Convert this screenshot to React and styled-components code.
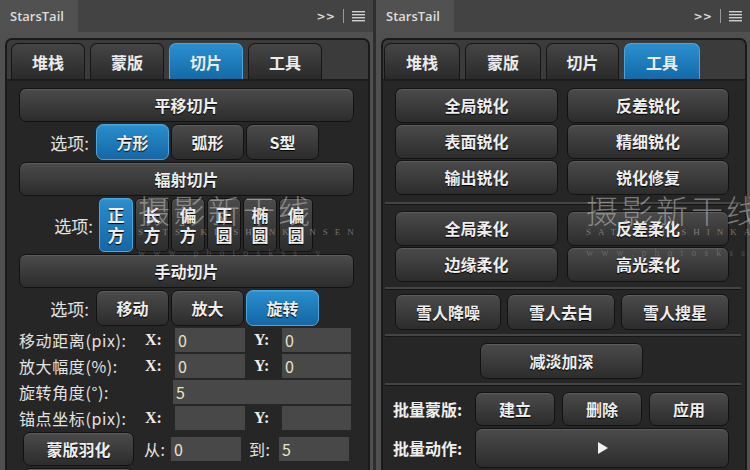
import React from "react"
import styled, { createGlobalStyle } from "styled-components"

const Global = createGlobalStyle`
  html, body { margin: 0; padding: 0; background: #2b2b2b; }
  body { font-family: "Noto Sans CJK SC", "Noto Sans", sans-serif; }
`

const Root = styled.div`
  position: relative;
  width: 750px;
  height: 470px;
  display: flex;
  overflow: hidden;
  background: #2b2b2b;
`

const Panel = styled.div`
  width: ${p => p.w}px;
  display: flex;
  flex-direction: column;
  background: #505050;
  border-left: ${p => (p.right ? "3px solid #2e2e2e" : "none")};
  flex-shrink: 0;
`

const Header = styled.div`
  height: 32px;
  display: flex;
  align-items: stretch;
  background: #434343;
  flex-shrink: 0;
`

const TitleTab = styled.div`
  width: 78px;
  background: #515151;
  color: #dcdcdc;
  font-family: "Open Sans", "Liberation Sans", sans-serif;
  font-weight: 600;
  font-size: 13px;
  display: flex;
  align-items: center;
  padding-left: 10px;
  box-sizing: border-box;
`

const HeaderTools = styled.div`
  margin-left: auto;
  display: flex;
  align-items: center;
  gap: 8px;
  padding-right: 8px;
  color: #d8d8d8;
  font-family: "DejaVu Sans", sans-serif;
  font-weight: bold;
  font-size: 11px;
`

const Divider = styled.span`
  width: 1px;
  height: 14px;
  background: #9a9a9a;
`

const Body = styled.div`
  flex: 1;
  padding: 6px 3px 0 5px;
  display: flex;
  flex-direction: column;
`

const Frame = styled.div`
  flex: 1;
  border: 2px solid #1a1a1a;
  border-bottom: none;
  border-radius: 7px 7px 0 0;
  background: #262626;
  display: flex;
  flex-direction: column;
`

const TabStrip = styled.div`
  display: flex;
  gap: ${p => p.gap}px;
  padding: 3px 4px 0 ${p => p.pl}px;
  background: #3b3b3b;
  border-radius: 5px 5px 0 0;
  border-bottom: 2px solid #1c1c1c;
`

const Tab = styled.div`
  width: ${p => p.w}px;
  height: 36px;
  box-sizing: border-box;
  border: 1px solid ${p => (p.active ? "#4aa5de" : "#161616")};
  border-bottom: none;
  border-radius: 7px 7px 0 0;
  background: ${p =>
    p.active
      ? "linear-gradient(#2b8fd0, #146aa8)"
      : "linear-gradient(#454545, #2a2a2a)"};
  color: #ececec;
  font-weight: 700;
  font-size: 16px;
  display: flex;
  align-items: center;
  justify-content: center;
`

const Content = styled.div`
  display: flex;
  flex-direction: column;
  gap: 2px;
  padding: ${p => p.pad};
`

const Btn = styled.div`
  box-sizing: border-box;
  height: ${p => p.h || 34}px;
  width: ${p => (p.w ? `${p.w}px` : "auto")};
  margin-left: ${p => p.ml || 0}px;
  border: 1px solid ${p => (p.active ? "#4aa5de" : "#121212")};
  border-radius: ${p => p.r || 7}px;
  background: ${p =>
    p.active
      ? "linear-gradient(#2a8ece, #1467a4)"
      : "linear-gradient(#4b4b4b, #2c2c2c)"};
  box-shadow: inset 0 1px 0 rgba(255, 255, 255, 0.1);
  color: #eeeeee;
  font-weight: 700;
  font-size: ${p => p.fs || 16}px;
  line-height: 1.15;
  display: flex;
  align-items: center;
  justify-content: center;
  text-align: center;
  text-shadow: 0 1px 1px #000;
`

const OptionRow = styled.div`
  display: flex;
  align-items: center;
  gap: ${p => p.gap || 2}px;
`

const OptLabel = styled.div`
  width: ${p => p.w}px;
  margin-right: ${p => p.mr}px;
  text-align: right;
  color: #e2e2e2;
  font-size: 17px;
`

const FieldGrid = styled.div`
  display: grid;
  grid-template-columns: 126px 30px 70px 37px 69px;
  align-items: center;
  height: 24px;
`

const FieldLabel = styled.div`
  color: #e2e2e2;
  font-size: 16px;
  letter-spacing: 0.6px;
  white-space: nowrap;
`

const Axis = styled.div`
  color: #eeeeee;
  font-family: "Liberation Serif", "DejaVu Serif", serif;
  font-weight: bold;
  font-size: 16px;
  padding-left: ${p => p.pl || 0}px;
`

const Input = styled.div`
  height: 24px;
  box-sizing: border-box;
  background: #484848;
  color: #ece3c9;
  font-size: 16px;
  padding-left: 3px;
  display: flex;
  align-items: center;
  grid-column: ${p => p.span || "auto"};
`

const BottomGrid = styled.div`
  display: grid;
  grid-template-columns: 122px 30px 70px 38px 70px;
  align-items: center;
`

const TwoCol = styled.div`
  display: grid;
  grid-template-columns: 163px 162px;
  column-gap: 9px;
  row-gap: 1px;
`

const ThreeCol = styled.div`
  display: grid;
  grid-template-columns: 106px 108px 108px;
  column-gap: 6px;
`

const Sep = styled.div`
  height: 2px;
  margin: ${p => p.m};
  background: #444444;
  border-bottom: 1px solid #161616;
`

const BatchRow = styled.div`
  display: grid;
  grid-template-columns: 73px 80px 80px 80px;
  column-gap: 7px;
  align-items: center;
`

const BatchLabel = styled.div`
  color: #eeeeee;
  font-weight: 700;
  font-size: 16px;
  white-space: nowrap;
  margin-left: -2px;
`

const Watermark = styled.div`
  position: absolute;
  left: ${p => p.x}px;
  top: ${p => p.y}px;
  pointer-events: none;
  color: rgba(205, 205, 205, 0.5);
  font-family: "Noto Sans CJK SC", sans-serif;
  font-weight: 300;
  white-space: nowrap;
`

const Big = styled.div`
  font-size: 32px;
  letter-spacing: 3px;
  line-height: 34px;
`

const Small = styled.div`
  font-family: "Liberation Serif", serif;
  font-size: 9px;
  letter-spacing: 7px;
  margin-top: 1px;
  color: rgba(210, 210, 210, 0.45);
`

const Url = styled.div`
  font-family: "Liberation Serif", serif;
  font-size: 10px;
  letter-spacing: 8px;
  margin-top: 10px;
  color: rgba(210, 210, 210, 0.25);
`

const Menu = () => (
  <svg width="13" height="11" viewBox="0 0 13 11">
    {[1, 4, 7, 10].map(y => (
      <rect key={y} x="0" y={y - 1} width="13" height="1.4" fill="#cfcfcf" />
    ))}
  </svg>
)

const Play = () => (
  <svg width="14" height="14" viewBox="0 0 14 14">
    <path d="M3 1 L13 7 L3 13 Z" fill="#f2f2f2" />
  </svg>
)

const PanelHeader = () => (
  <Header>
    <TitleTab>StarsTail</TitleTab>
    <HeaderTools>
      <span>&gt;&gt;</span>
      <Divider />
      <Menu />
    </HeaderTools>
  </Header>
)

const tabs = ["堆栈", "蒙版", "切片", "工具"]

const tall = [
  ["正", "方"],
  ["长", "方"],
  ["偏", "方"],
  ["正", "圆"],
  ["椭", "圆"],
  ["偏", "圆"],
]

const SlicePanel = () => (
  <Panel w={373}>
    <PanelHeader />
    <Body>
      <Frame>
        <TabStrip gap={5} pl={4}>
          {tabs.map((t, i) => (
            <Tab key={t} w={74} active={i === 2}>{t}</Tab>
          ))}
        </TabStrip>
        <Content pad="7px 14px 0 12px">
          <Btn>平移切片</Btn>
          <OptionRow>
            <OptLabel w={70} mr={5}>选项:</OptLabel>
            <Btn h={36} w={73} active>方形</Btn>
            <Btn h={36} w={73}>弧形</Btn>
            <Btn h={36} w={73}>S型</Btn>
          </OptionRow>
          <Btn>辐射切片</Btn>
          <OptionRow>
            <OptLabel w={74} mr={4}>选项:</OptLabel>
            {tall.map((c, i) => (
              <Btn key={i} h={54} w={34} r={5} fs={17} active={i === 0}>
                {c[0]}<br />{c[1]}
              </Btn>
            ))}
          </OptionRow>
          <Btn>手动切片</Btn>
          <OptionRow>
            <OptLabel w={70} mr={5}>选项:</OptLabel>
            <Btn h={36} w={73}>移动</Btn>
            <Btn h={36} w={73}>放大</Btn>
            <Btn h={36} w={73} active>旋转</Btn>
          </OptionRow>
          <FieldGrid>
            <FieldLabel>移动距离(pix):</FieldLabel>
            <Axis>X:</Axis>
            <Input>0</Input>
            <Axis pl={9}>Y:</Axis>
            <Input>0</Input>
          </FieldGrid>
          <FieldGrid>
            <FieldLabel>放大幅度(%):</FieldLabel>
            <Axis>X:</Axis>
            <Input>0</Input>
            <Axis pl={9}>Y:</Axis>
            <Input>0</Input>
          </FieldGrid>
          <FieldGrid>
            <FieldLabel>旋转角度(°):</FieldLabel>
            <Input span="2 / 6" style={{ marginLeft: 28 }}>5</Input>
          </FieldGrid>
          <FieldGrid>
            <FieldLabel>锚点坐标(pix):</FieldLabel>
            <Axis>X:</Axis>
            <Input />
            <Axis pl={9}>Y:</Axis>
            <Input />
          </FieldGrid>
          <BottomGrid>
            <Btn w={111} ml={4}>蒙版羽化</Btn>
            <FieldLabel style={{ paddingLeft: 3 }}>从:</FieldLabel>
            <Input>0</Input>
            <FieldLabel style={{ paddingLeft: 8 }}>到:</FieldLabel>
            <Input>5</Input>
          </BottomGrid>
          <BottomGrid>
            <Btn w={111} ml={4} />
          </BottomGrid>
        </Content>
      </Frame>
    </Body>
  </Panel>
)

const ToolsPanel = () => (
  <Panel w={374} right>
    <PanelHeader />
    <Body>
      <Frame>
        <TabStrip gap={5} pl={1}>
          {tabs.map((t, i) => (
            <Tab key={t} w={i === 2 ? 73 : 76} active={i === 3}>{t}</Tab>
          ))}
        </TabStrip>
        <Content pad="7px 0 0 12px">
          <TwoCol>
            <Btn h={35}>全局锐化</Btn>
            <Btn h={35}>反差锐化</Btn>
            <Btn h={35}>表面锐化</Btn>
            <Btn h={35}>精细锐化</Btn>
            <Btn h={35}>输出锐化</Btn>
            <Btn h={35}>锐化修复</Btn>
          </TwoCol>
          <Sep m="5px 4px 4px -10px" />
          <TwoCol>
            <Btn h={35}>全局柔化</Btn>
            <Btn h={35}>反差柔化</Btn>
            <Btn h={35}>边缘柔化</Btn>
            <Btn h={35}>高光柔化</Btn>
          </TwoCol>
          <Sep m="3px 4px 2px -10px" />
          <ThreeCol>
            <Btn h={36}>雪人降噪</Btn>
            <Btn h={36}>雪人去白</Btn>
            <Btn h={36}>雪人搜星</Btn>
          </ThreeCol>
          <Sep m="2px 4px 4px -10px" />
          <Btn h={36} w={163} ml={85}>减淡加深</Btn>
          <Sep m="2px 4px 4px -10px" />
          <BatchRow>
            <BatchLabel>批量蒙版:</BatchLabel>
            <Btn>建立</Btn>
            <Btn>删除</Btn>
            <Btn>应用</Btn>
          </BatchRow>
          <BatchRow>
            <BatchLabel>批量动作:</BatchLabel>
            <Btn h={40} style={{ gridColumn: "2 / 5" }}><Play /></Btn>
          </BatchRow>
        </Content>
      </Frame>
    </Body>
  </Panel>
)

const App = () => (
  <Root>
    <Global />
    <SlicePanel />
    <ToolsPanel />
    <Watermark x={138} y={192}>
      <Big>摄影新干线</Big>
      <Small>SATSUKI SHINKANSEN</Small>
      <Url>www.photoskss.v</Url>
    </Watermark>
    <Watermark x={586} y={192}>
      <Big>摄影新干线</Big>
      <Small>SATSUKI SHINKANSEN</Small>
      <Url>www.photoskss.v</Url>
    </Watermark>
  </Root>
)

export default App
